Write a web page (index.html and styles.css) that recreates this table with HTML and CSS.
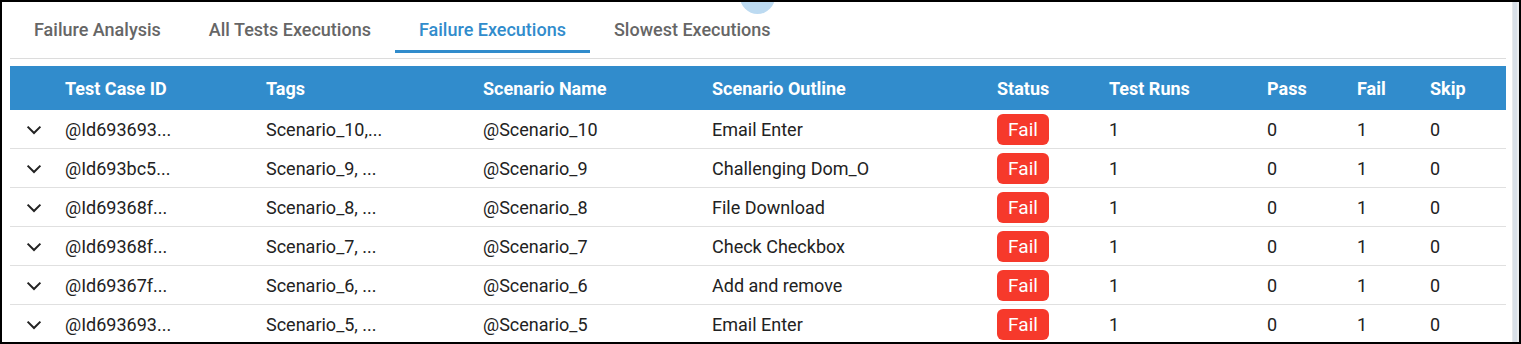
FILE: index.html
```html
<!DOCTYPE html>
<html lang="en">
<head>
<meta charset="utf-8">
<title>Failure Executions</title>
<link rel="stylesheet" href="styles.css">
</head>
<body>
<div class="frame">
  <div class="content">
    <span class="ripple"></span>
    <nav class="tabs">
      <div class="tab">Failure Analysis</div>
      <div class="tab">All Tests Executions</div>
      <div class="tab active">Failure Executions</div>
      <div class="tab">Slowest Executions</div>
    </nav>
    <div class="divider"></div>
    <div class="table">
      <div class="row head">
        <div></div>
        <div>Test Case ID</div>
        <div>Tags</div>
        <div>Scenario Name</div>
        <div>Scenario Outline</div>
        <div>Status</div>
        <div>Test Runs</div>
        <div>Pass</div>
        <div>Fail</div>
        <div>Skip</div>
      </div>
      <div class="row">
        <div><svg class="chev" viewBox="0 0 16 10"><polyline points="1.6,1.6 8,8 14.4,1.6"/></svg></div>
        <div>@Id693693...</div><div>Scenario_10,...</div><div>@Scenario_10</div><div>Email Enter</div>
        <div><span class="badge">Fail</span></div><div>1</div><div>0</div><div>1</div><div>0</div>
      </div>
      <div class="row">
        <div><svg class="chev" viewBox="0 0 16 10"><polyline points="1.6,1.6 8,8 14.4,1.6"/></svg></div>
        <div>@Id693bc5...</div><div>Scenario_9, ...</div><div>@Scenario_9</div><div>Challenging Dom_O</div>
        <div><span class="badge">Fail</span></div><div>1</div><div>0</div><div>1</div><div>0</div>
      </div>
      <div class="row">
        <div><svg class="chev" viewBox="0 0 16 10"><polyline points="1.6,1.6 8,8 14.4,1.6"/></svg></div>
        <div>@Id69368f...</div><div>Scenario_8, ...</div><div>@Scenario_8</div><div>File Download</div>
        <div><span class="badge">Fail</span></div><div>1</div><div>0</div><div>1</div><div>0</div>
      </div>
      <div class="row">
        <div><svg class="chev" viewBox="0 0 16 10"><polyline points="1.6,1.6 8,8 14.4,1.6"/></svg></div>
        <div>@Id69368f...</div><div>Scenario_7, ...</div><div>@Scenario_7</div><div>Check Checkbox</div>
        <div><span class="badge">Fail</span></div><div>1</div><div>0</div><div>1</div><div>0</div>
      </div>
      <div class="row">
        <div><svg class="chev" viewBox="0 0 16 10"><polyline points="1.6,1.6 8,8 14.4,1.6"/></svg></div>
        <div>@Id69367f...</div><div>Scenario_6, ...</div><div>@Scenario_6</div><div>Add and remove</div>
        <div><span class="badge">Fail</span></div><div>1</div><div>0</div><div>1</div><div>0</div>
      </div>
      <div class="row">
        <div><svg class="chev" viewBox="0 0 16 10"><polyline points="1.6,1.6 8,8 14.4,1.6"/></svg></div>
        <div>@Id693693...</div><div>Scenario_5, ...</div><div>@Scenario_5</div><div>Email Enter</div>
        <div><span class="badge">Fail</span></div><div>1</div><div>0</div><div>1</div><div>0</div>
      </div>
    </div>
  </div>
  <div class="scrollbar"></div>
</div>
</body>
</html>
```
FILE: styles.css
```css
html, body {
  margin: 0;
  padding: 0;
  background: #fff;
}
body {
  font-family: Roboto, "Liberation Sans", Arial, sans-serif;
}
.frame {
  width: 1521px;
  height: 344px;
  box-sizing: border-box;
  border: 2px solid #000;
  display: flex;
  overflow: hidden;
  background: #fff;
}
.content {
  position: relative;
  width: 1510px;
  box-sizing: border-box;
  padding: 0 6px 0 8px;
  overflow: hidden;
}
.ripple {
  position: absolute;
  left: 738px;
  top: -23px;
  width: 35px;
  height: 35px;
  border-radius: 50%;
  background: #bcdaf1;
}
.scrollbar {
  width: 7px;
  flex: none;
  background: linear-gradient(to right, #e6e9ec 0, #e6e9ec 1px, #d9e0e8 1px, #d9e0e8 5px, #e9ecef 5px);
}
.tabs {
  display: flex;
  height: 51px;
}
.tab {
  box-sizing: border-box;
  height: 51px;
  padding: 6px 24px 0;
  display: flex;
  align-items: center;
  font-size: 18px;
  font-weight: 500;
  color: #666;
  border-bottom: 3px solid transparent;
}
.tab.active {
  color: #318ccc;
  border-bottom-color: #318ccc;
}
.divider {
  height: 1px;
  background: #dcdcdc;
  margin: 5px 0 7px;
}
.row {
  display: grid;
  grid-template-columns: 55px 201px 217px 229px 285px 112px 158px 90px 73px 76px;
  align-items: center;
  height: 39px;
  box-sizing: border-box;
  border-bottom: 1px solid #e0e0e0;
  font-size: 18px;
  color: #222;
}
.row.head {
  height: 44px;
  background: #318ccc;
  color: #fff;
  font-weight: 700;
  border-bottom: none;
}
.chev {
  display: block;
  width: 16px;
  height: 10px;
  margin: 1px 0 0 16px;
  fill: none;
  stroke: #222;
  stroke-width: 2;
}
.badge {
  display: inline-flex;
  align-items: center;
  justify-content: center;
  width: 52px;
  height: 31px;
  border-radius: 6px;
  background: #f6392b;
  color: #fff;
  font-size: 19px;
}
```
